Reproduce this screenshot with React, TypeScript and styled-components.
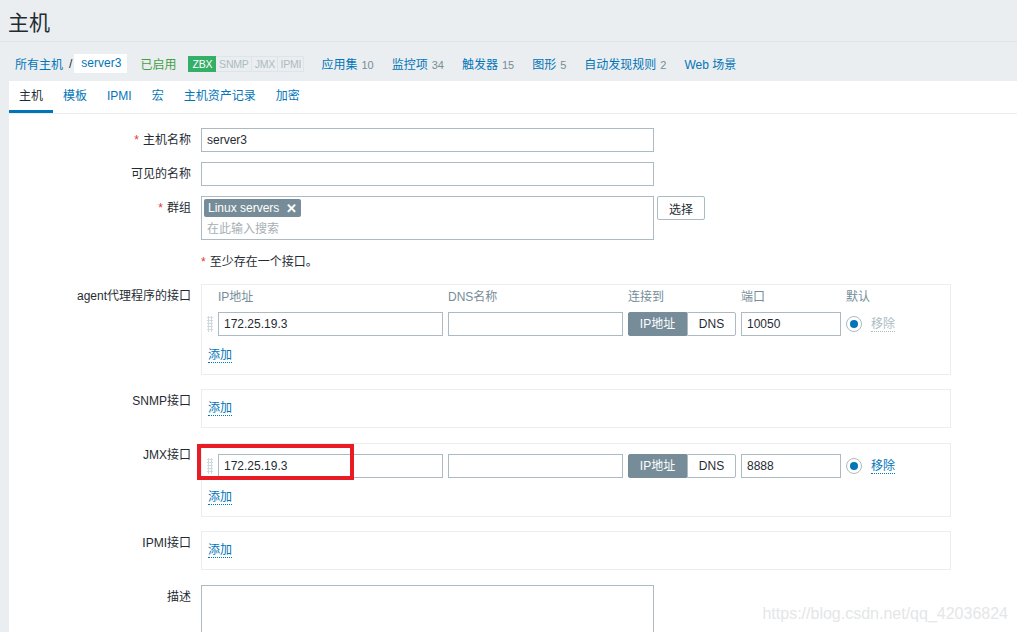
import React from 'react';
import styled, { createGlobalStyle } from 'styled-components';

const GlobalStyle = createGlobalStyle`
    html, body {
        margin: 0;
        padding: 0;
        overflow: hidden;
        background: #ebeef0;
    }
    body {
        font-family: "Liberation Sans", "Noto Sans CJK SC", sans-serif;
        font-size: 12px;
        color: #1f2c33;
    }
    * {
        box-sizing: border-box;
    }
`

const StyledPage = styled.div`
    position: relative;
    width: 1017px;
    height: 632px;
    overflow: hidden;
`
const StyledHeader = styled.header`
    height: 42px;
    padding: 5px 8px 0;
    border-bottom: 1px solid #dfe4e7;
`
const StyledTitle = styled.h1`
    margin: 0;
    font-size: 21px;
    line-height: 36px;
    font-weight: normal;
    color: #1f2c33;
`
const StyledNavBar = styled.nav`
    height: 39px;
    display: flex;
    align-items: center;
    padding: 4px 0 0 15px;
`
const StyledCrumbLink = styled.a`
    color: #0275b8;
    text-decoration: none;
`
const StyledCrumbSep = styled.span`
    margin: 0 2px 0 6px;
`
const StyledCrumbCurrent = styled.span`
    background: #fff;
    color: #0275b8;
    height: 19px;
    line-height: 19px;
    padding: 0 6px 0 7px;
`
const StyledEnabled = styled.span`
    color: #429e47;
    margin-left: 13px;
`
const StyledStatusGroup = styled.div`
    display: flex;
    margin-left: 12px;
    margin-right: 17px;
`
const StyledStatus = styled.span<{ $on?: boolean; $width: number }>`
    width: ${({ $width }) => $width}px;
    height: 16px;
    line-height: 14px;
    font-size: 10.5px;
    text-align: center;
    letter-spacing: -0.2px;
    border: 1px solid ${({ $on }) => ($on ? '#34af67' : '#dfe4e7')};
    background: ${({ $on }) => ($on ? '#34af67' : '#ebeef0')};
    color: ${({ $on }) => ($on ? '#fff' : '#acbbc2')};
    & + & {
        border-left: none;
    }
`
const StyledNavLinks = styled.div`
    display: flex;
    gap: 18px;
`
const StyledNavLink = styled.a`
    color: #0275b8;
    text-decoration: none;
    white-space: nowrap;
`
const StyledCount = styled.sup`
    vertical-align: baseline;
    font-size: 11px;
    color: #768d99;
    margin-left: 4px;
`
const StyledPanel = styled.main`
    margin-left: 9px;
    background: #fff;
    min-height: 560px;
`
const StyledTabs = styled.ul`
    display: flex;
    margin: 0;
    padding: 0;
    list-style: none;
    height: 33px;
    border-bottom: 1px solid #ebeef0;
`
const StyledTab = styled.li<{ $active?: boolean }>`
    padding: 2px 10px 0;
    height: 32px;
    line-height: 27px;
    color: ${({ $active }) => ($active ? '#1f2c33' : '#0275b8')};
    border-bottom: 3px solid ${({ $active }) => ($active ? '#0275b8' : 'transparent')};
`
const StyledForm = styled.div`
    display: grid;
    grid-template-columns: 182px 1fr;
    column-gap: 10px;
    row-gap: 10px;
    padding-top: 14px;
`
const StyledLabel = styled.label`
    text-align: right;
    padding-top: 5px;
    line-height: 14px;
    white-space: nowrap;
`
const StyledRequired = styled.span`
    color: #e33734;
    margin-right: 4px;
`
const StyledField = styled.div<{ $gapAfter?: number }>`
    display: flex;
    align-items: flex-start;
    min-width: 0;
    margin-bottom: ${({ $gapAfter }) => $gapAfter ?? 0}px;
`
const StyledInput = styled.div<{ $width: number }>`
    width: ${({ $width }) => $width}px;
    height: 24px;
    line-height: 22px;
    border: 1px solid #acbbc2;
    background: #fff;
    padding: 0 5px;
    white-space: nowrap;
    overflow: hidden;
`
const StyledMultiSelect = styled.div`
    width: 453px;
    height: 44px;
    border: 1px solid #acbbc2;
    padding: 2px 2px 0;
`
const StyledChip = styled.span`
    display: inline-flex;
    align-items: center;
    height: 18px;
    padding: 0 4px;
    background: #768d99;
    color: #fff;
    border-radius: 2px;
    gap: 7px;
`
const StyledChipClose = styled.span`
    font-size: 13px;
    font-weight: bold;
    line-height: 1;
`
const StyledPlaceholder = styled.div`
    color: #a6b0b6;
    padding: 4px 3px 0;
    line-height: 16px;
`
const StyledButton = styled.button`
    margin-left: 3px;
    height: 24px;
    padding: 0 11px;
    border: 1px solid #acbbc2;
    background: #fff;
    color: #1f2c33;
    font: inherit;
    border-radius: 2px;
`
const StyledNote = styled.div`
    padding-top: 5px;
    line-height: 14px;
    height: 24px;
`
const StyledIfaceBox = styled.div<{ $top: number }>`
    position: relative;
    width: 750px;
    border: 1px solid #ebeef0;
    padding: ${({ $top }) => $top}px 5px 12px;
`
const StyledIfaceGrid = styled.div`
    display: grid;
    grid-template-columns: 6px 225px 175px 108px 100px 16px auto;
    column-gap: 5px;
    align-items: center;
`
const StyledColHead = styled.div`
    color: #768d99;
    line-height: 14px;
    height: 14px;
    margin-bottom: 8px;
    white-space: nowrap;
`
const StyledDragHandle = styled.div`
    width: 6px;
    height: 16px;
    background-image: radial-gradient(circle, #d0d9dd 1px, transparent 1.2px);
    background-size: 3px 3px;
`
const StyledToggle = styled.div`
    display: flex;
    height: 24px;
`
const StyledToggleOption = styled.span<{ $active?: boolean; $width: number }>`
    width: ${({ $width }) => $width}px;
    line-height: 22px;
    text-align: center;
    border: 1px solid ${({ $active }) => ($active ? '#768d99' : '#acbbc2')};
    background: ${({ $active }) => ($active ? '#768d99' : '#fff')};
    color: ${({ $active }) => ($active ? '#fff' : '#1f2c33')};
    border-radius: ${({ $active }) => ($active ? '2px 0 0 2px' : '0 2px 2px 0')};
`
const StyledRadio = styled.span`
    width: 16px;
    height: 16px;
    border-radius: 50%;
    border: 1px solid #acbbc2;
    display: flex;
    align-items: center;
    justify-content: center;
    &::after {
        content: '';
        width: 8px;
        height: 8px;
        border-radius: 50%;
        background: #0275b8;
    }
`
const StyledLinkAction = styled.a<{ $disabled?: boolean }>`
    display: inline-block;
    color: ${({ $disabled }) => ($disabled ? '#acbbc2' : '#0275b8')};
    line-height: 14px;
    text-decoration: none;
    border-bottom: 1px dotted ${({ $disabled }) => ($disabled ? '#acbbc2' : '#0275b8')};
`
const StyledRemove = styled(StyledLinkAction)`
    margin-left: 4px;
`
const StyledAddRow = styled.div<{ $top: number }>`
    margin-top: ${({ $top }) => $top}px;
    padding-left: 1px;
    height: 14px;
`
const StyledHighlight = styled.div`
    position: absolute;
    left: -5px;
    top: 0;
    width: 157px;
    height: 36px;
    border: 4px solid #e81c24;
    pointer-events: none;
`
const StyledTextArea = styled.div`
    width: 453px;
    height: 80px;
    border: 1px solid #acbbc2;
`
const StyledWatermark = styled.div`
    position: absolute;
    right: 9px;
    bottom: 9px;
    font-size: 16px;
    color: #e4e6e8;
`

const navLinks = [
    { name: '应用集', count: '10' },
    { name: '监控项', count: '34' },
    { name: '触发器', count: '15' },
    { name: '图形', count: '5' },
    { name: '自动发现规则', count: '2' },
    { name: 'Web 场景' },
]
const statuses = [
    { name: 'ZBX', width: 28, on: true },
    { name: 'SNMP', width: 36 },
    { name: 'JMX', width: 26 },
    { name: 'IPMI', width: 26 },
]
const tabs = ['主机', '模板', 'IPMI', '宏', '主机资产记录', '加密']

type IfaceRowProps = { ip: string; port: string; removable?: boolean }

function IfaceRow({ ip, port, removable }: IfaceRowProps) {
    return (
        <>
            <StyledDragHandle />
            <StyledInput $width={225}>{ip}</StyledInput>
            <StyledInput $width={175} />
            <StyledToggle>
                <StyledToggleOption $active $width={59}>IP地址</StyledToggleOption>
                <StyledToggleOption $width={49}>DNS</StyledToggleOption>
            </StyledToggle>
            <StyledInput $width={100}>{port}</StyledInput>
            <StyledRadio />
            <span>
                <StyledRemove $disabled={!removable}>移除</StyledRemove>
            </span>
        </>
    )
}

export default function App(): JSX.Element {
    return (
        <StyledPage>
            <GlobalStyle />
            <StyledHeader>
                <StyledTitle>主机</StyledTitle>
            </StyledHeader>
            <StyledNavBar>
                <StyledCrumbLink>所有主机</StyledCrumbLink>
                <StyledCrumbSep>/</StyledCrumbSep>
                <StyledCrumbCurrent>server3</StyledCrumbCurrent>
                <StyledEnabled>已启用</StyledEnabled>
                <StyledStatusGroup>
                    {statuses.map((s) => (
                        <StyledStatus key={s.name} $on={s.on} $width={s.width}>{s.name}</StyledStatus>
                    ))}
                </StyledStatusGroup>
                <StyledNavLinks>
                    {navLinks.map((item) => (
                        <StyledNavLink key={item.name}>
                            {item.name}
                            {item.count && <StyledCount>{item.count}</StyledCount>}
                        </StyledNavLink>
                    ))}
                </StyledNavLinks>
            </StyledNavBar>

            <StyledPanel>
                <StyledTabs>
                    {tabs.map((t, i) => (
                        <StyledTab key={t} $active={i === 0}>{t}</StyledTab>
                    ))}
                </StyledTabs>

                <StyledForm>
                    <StyledLabel><StyledRequired>*</StyledRequired>主机名称</StyledLabel>
                    <StyledField>
                        <StyledInput $width={453}>server3</StyledInput>
                    </StyledField>

                    <StyledLabel>可见的名称</StyledLabel>
                    <StyledField>
                        <StyledInput $width={453} />
                    </StyledField>

                    <StyledLabel><StyledRequired>*</StyledRequired>群组</StyledLabel>
                    <StyledField>
                        <StyledMultiSelect>
                            <StyledChip>Linux servers<StyledChipClose>✕</StyledChipClose></StyledChip>
                            <StyledPlaceholder>在此输入搜索</StyledPlaceholder>
                        </StyledMultiSelect>
                        <StyledButton>选择</StyledButton>
                    </StyledField>

                    <span />
                    <StyledNote><StyledRequired>*</StyledRequired>至少存在一个接口。</StyledNote>

                    <StyledLabel>agent代理程序的接口</StyledLabel>
                    <StyledField $gapAfter={4}>
                        <StyledIfaceBox $top={5}>
                            <StyledIfaceGrid>
                                <span />
                                <StyledColHead>IP地址</StyledColHead>
                                <StyledColHead>DNS名称</StyledColHead>
                                <StyledColHead>连接到</StyledColHead>
                                <StyledColHead>端口</StyledColHead>
                                <StyledColHead>默认</StyledColHead>
                                <span />
                                <IfaceRow ip="172.25.19.3" port="10050" />
                            </StyledIfaceGrid>
                            <StyledAddRow $top={12}><StyledLinkAction>添加</StyledLinkAction></StyledAddRow>
                        </StyledIfaceBox>
                    </StyledField>

                    <StyledLabel>SNMP接口</StyledLabel>
                    <StyledField $gapAfter={5}>
                        <StyledIfaceBox $top={11}>
                            <StyledAddRow $top={0}><StyledLinkAction>添加</StyledLinkAction></StyledAddRow>
                        </StyledIfaceBox>
                    </StyledField>

                    <StyledLabel>JMX接口</StyledLabel>
                    <StyledField $gapAfter={4}>
                        <StyledIfaceBox $top={10}>
                            <StyledIfaceGrid>
                                <IfaceRow ip="172.25.19.3" port="8888" removable />
                            </StyledIfaceGrid>
                            <StyledAddRow $top={12}><StyledLinkAction>添加</StyledLinkAction></StyledAddRow>
                            <StyledHighlight />
                        </StyledIfaceBox>
                    </StyledField>

                    <StyledLabel>IPMI接口</StyledLabel>
                    <StyledField $gapAfter={5}>
                        <StyledIfaceBox $top={11}>
                            <StyledAddRow $top={0}><StyledLinkAction>添加</StyledLinkAction></StyledAddRow>
                        </StyledIfaceBox>
                    </StyledField>

                    <StyledLabel>描述</StyledLabel>
                    <StyledField>
                        <StyledTextArea />
                    </StyledField>
                </StyledForm>
            </StyledPanel>
            <StyledWatermark>https://blog.csdn.net/qq_42036824</StyledWatermark>
        </StyledPage>
    )
}
